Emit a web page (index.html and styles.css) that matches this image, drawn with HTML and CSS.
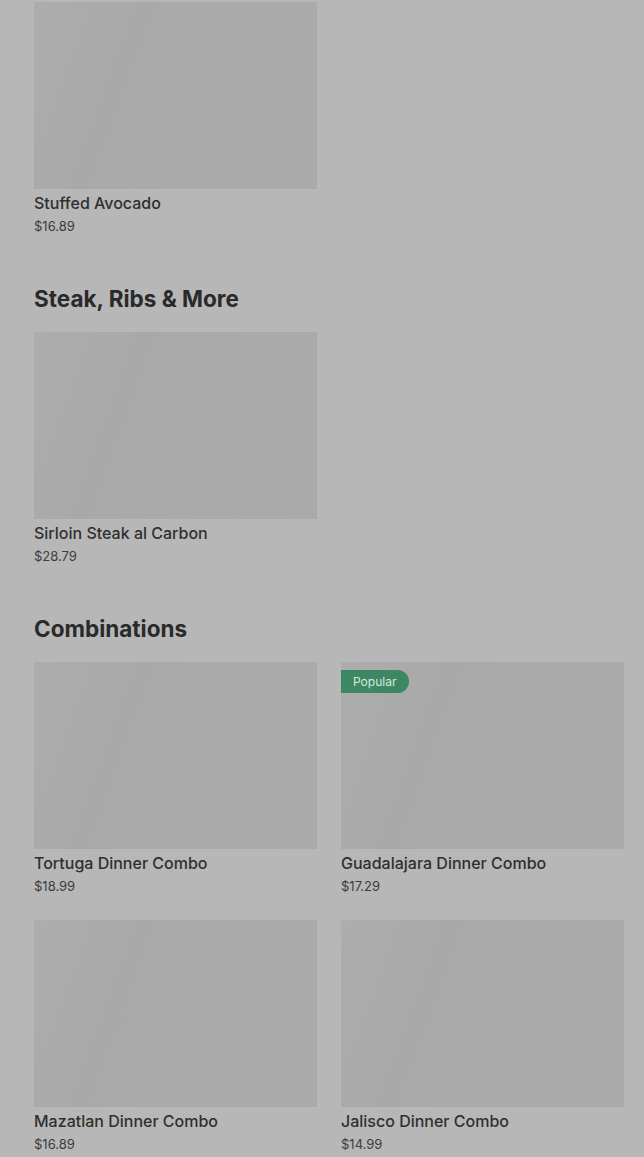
FILE: index.html
```html
<!DOCTYPE html>
<html lang="en">
<head>
    <meta charset="UTF-8">
    <meta name="viewport" content="width=device-width, initial-scale=1.0">
    <title>Menu</title>
    <link rel="stylesheet" href="styles.css">
</head>
<body>

<main class="menu">
    <section class="menu-section first">
        <div class="items">
            <div class="item">
                <div class="thumb"></div>
                <p class="name">Stuffed Avocado</p>
                <p class="price">$16.89</p>
            </div>
        </div>
    </section>

    <section class="menu-section">
        <h2>Steak, Ribs &amp; More</h2>
        <div class="items">
            <div class="item">
                <div class="thumb"></div>
                <p class="name">Sirloin Steak al Carbon</p>
                <p class="price">$28.79</p>
            </div>
        </div>
    </section>

    <section class="menu-section">
        <h2>Combinations</h2>
        <div class="items">
            <div class="item">
                <div class="thumb"></div>
                <p class="name">Tortuga Dinner Combo</p>
                <p class="price">$18.99</p>
            </div>
            <div class="item">
                <div class="thumb">
                    <span class="badge">Popular</span>
                </div>
                <p class="name">Guadalajara Dinner Combo</p>
                <p class="price">$17.29</p>
            </div>
            <div class="item">
                <div class="thumb"></div>
                <p class="name">Mazatlan Dinner Combo</p>
                <p class="price">$16.89</p>
            </div>
            <div class="item">
                <div class="thumb"></div>
                <p class="name">Jalisco Dinner Combo</p>
                <p class="price">$14.99</p>
            </div>
        </div>
    </section>
</main>

</body>
</html>
```

FILE: styles.css
```css
body {
    font-family: Inter, "Liberation Sans", Arial, sans-serif;
    margin: 0;
    padding: 0;
    background-color: #b7b7b7;
    color: #2f2f2f;
}
.menu {
    padding: 2px 20px 0 34px;
}
.menu-section {
    margin-bottom: 49px;
}
.menu-section h2 {
    font-size: 22.5px;
    line-height: 28px;
    font-weight: 700;
    margin: 0 0 19px 0;
    color: #2a2a2a;
}
.items {
    display: grid;
    grid-template-columns: 283px 283px;
    column-gap: 24px;
    row-gap: 24px;
}
.thumb {
    position: relative;
    height: 187px;
    background: linear-gradient(110deg, #adadad 0%, #a9a9a9 30%, #aaaaaa 100%);
}
.badge {
    position: absolute;
    top: 8px;
    left: 0;
    background-color: #3b8862;
    color: #d9e8df;
    font-size: 12px;
    line-height: 23px;
    padding: 0 13px 0 12px;
    border-radius: 0 12px 12px 0;
}
.name {
    margin: 3px 0 0 0;
    font-size: 16px;
    line-height: 22px;
    font-weight: 500;
}
.price {
    margin: 2px 0 0 0;
    font-size: 13px;
    line-height: 20px;
    color: #3c3c3c;
}
```
